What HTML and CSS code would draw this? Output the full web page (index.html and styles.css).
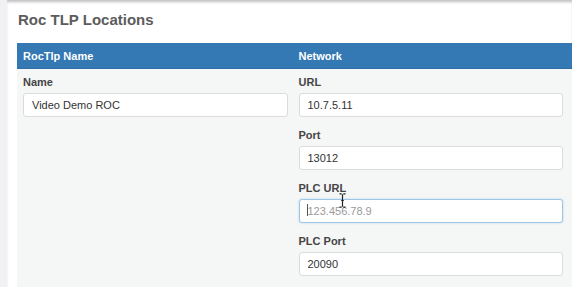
FILE: index.html
```html
<!DOCTYPE html>
<html>
<head>
    <title>Roc TLP Locations</title>
    <link rel="stylesheet" href="styles.css">
</head>
<body>
    <div class="page">
        <h2 class="title">Roc TLP Locations</h2>
        <div class="panel">
            <div class="panel-head">
                <div>RocTlp Name</div>
                <div>Network</div>
            </div>
            <div class="panel-body">
                <div class="col">
                    <div class="form-group">
                        <label for="name">Name</label>
                        <input type="text" id="name" value="Video Demo ROC">
                    </div>
                </div>
                <div class="col">
                    <div class="form-group">
                        <label for="url">URL</label>
                        <input type="text" id="url" value="10.7.5.11">
                    </div>
                    <div class="form-group">
                        <label for="port">Port</label>
                        <input type="text" id="port" value="13012">
                    </div>
                    <div class="form-group plc-url">
                        <label for="plcUrl">PLC URL</label>
                        <input type="text" id="plcUrl" class="focused" placeholder="123.456.78.9">
                        <span class="caret"></span>
                        <svg class="ibeam" width="7" height="15" viewBox="0 0 7 15">
                            <path d="M0.5 0.8h2.2M4.3 0.8h2.2M3.5 1.2v12.6M0.5 14.2h2.2M4.3 14.2h2.2M2.2 7.5h2.6" stroke="#222" stroke-width="1.2" fill="none"/>
                        </svg>
                    </div>
                    <div class="form-group">
                        <label for="plcPort">PLC Port</label>
                        <input type="text" id="plcPort" value="20090">
                    </div>
                </div>
            </div>
        </div>
    </div>
</body>
</html>
```

FILE: styles.css
```css
body {
    margin: 0;
    background-color: #f0f1f2;
    font-family: "Liberation Sans", Arial, sans-serif;
}
.page {
    display: flex;
    flex-direction: column;
    margin-left: 7px;
    height: 287px;
    overflow: hidden;
    background-color: #fff;
    padding: 10px 0 0 10px;
    box-sizing: border-box;
    box-shadow: inset 0 3px 3px -1px rgba(0, 0, 0, 0.25);
}
.title {
    margin: 0 0 0 1px;
    height: 33px;
    flex: none;
    line-height: 19px;
    font-size: 15px;
    font-weight: bold;
    color: #5c5c5c;
}
.panel {
    flex: 1;
    background-color: #f5f6f6;
}
.panel-head {
    display: grid;
    grid-template-columns: 1fr 1fr;
    column-gap: 11px;
    padding: 0 9px 0 6px;
    height: 26px;
    line-height: 26px;
    background-color: #3478b4;
    border-bottom: 1px solid #2f6fa6;
    box-sizing: border-box;
    color: #fff;
    font-size: 11px;
    font-weight: bold;
}
.panel-body {
    display: grid;
    grid-template-columns: 1fr 1fr;
    column-gap: 11px;
    padding: 6px 9px 0 6px;
}
.form-group {
    margin-bottom: 11px;
}
.plc-url {
    position: relative;
}
label {
    display: block;
    line-height: 15px;
    margin-bottom: 3px;
    font-size: 11px;
    font-weight: bold;
    color: #454545;
}
input[type="text"] {
    display: block;
    width: 100%;
    height: 24px;
    box-sizing: border-box;
    padding: 0 8px;
    border: 1px solid #dcdcdc;
    border-radius: 3px;
    background-color: #fff;
    font-family: "Liberation Sans", Arial, sans-serif;
    font-size: 11px;
    color: #333;
    outline: none;
}
input.focused {
    border-color: #9cc6e4;
    box-shadow: 0 0 2px rgba(102, 175, 233, 0.5);
}
input::placeholder {
    color: #9a9a9a;
}
.caret {
    position: absolute;
    left: 8px;
    top: 23px;
    width: 1px;
    height: 12px;
    background-color: #555;
}
.ibeam {
    position: absolute;
    left: 40px;
    top: 12px;
}
```
